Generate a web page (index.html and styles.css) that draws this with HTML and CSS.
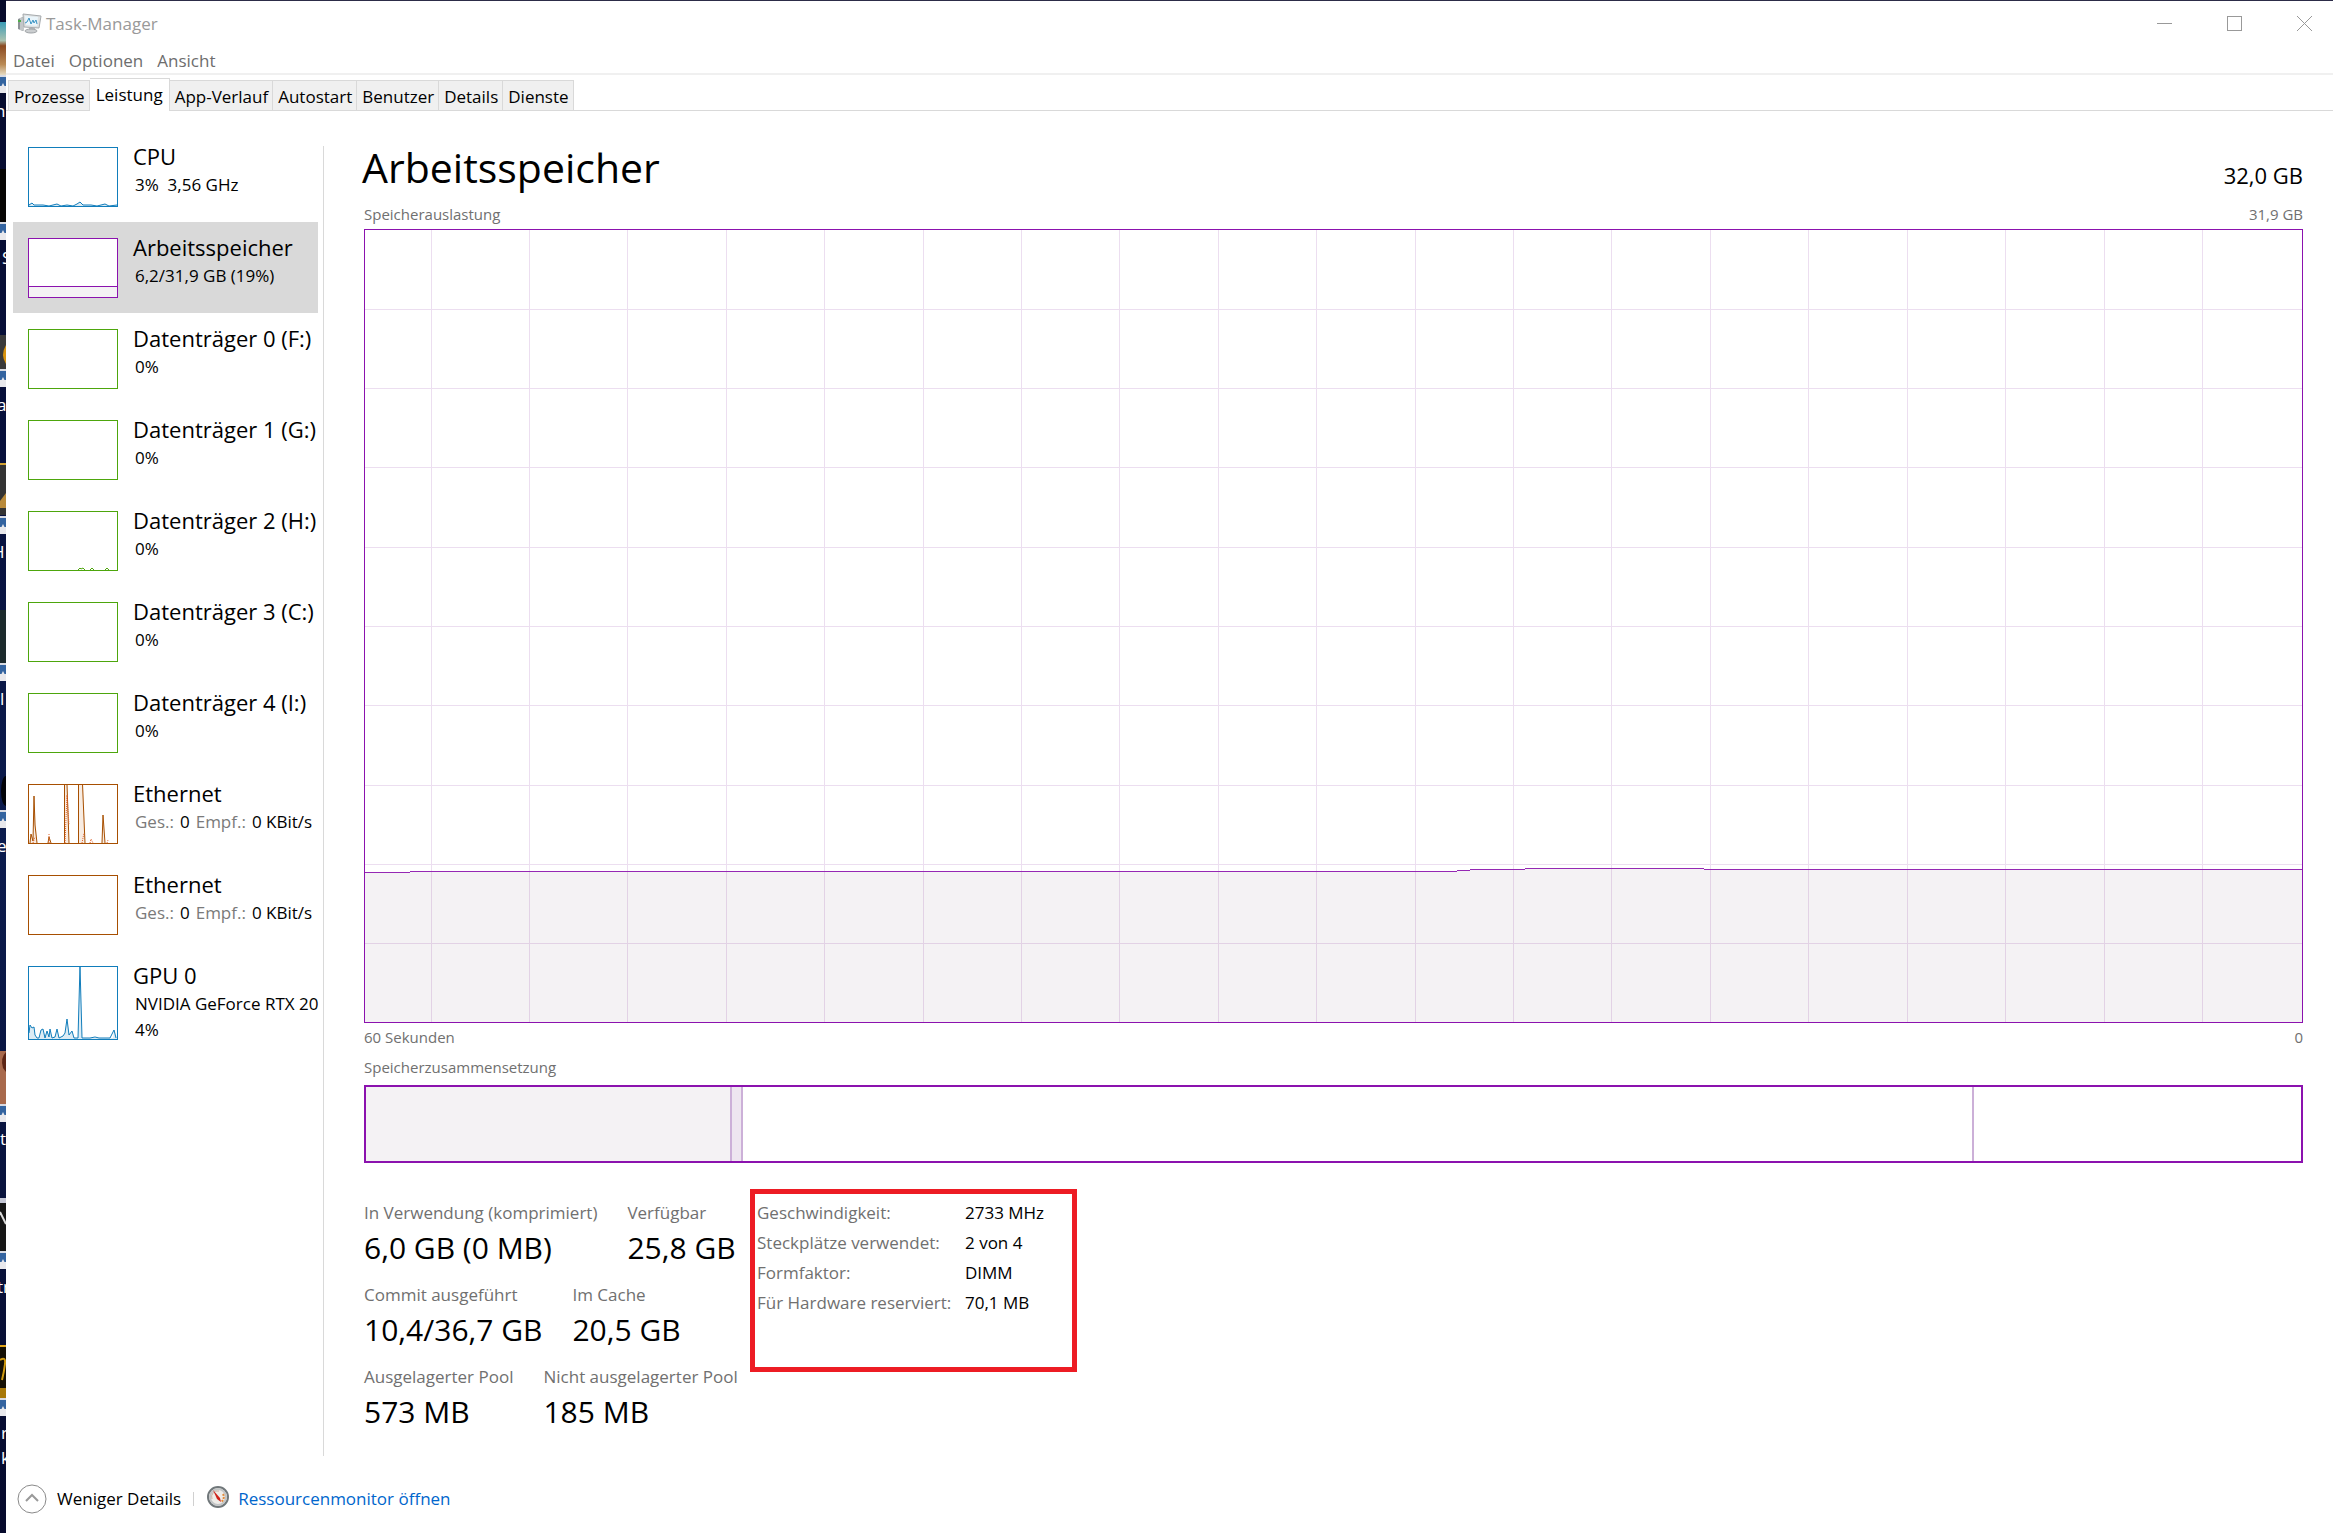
FILE: index.html
```html
<!DOCTYPE html>
<html lang="de">
<head>
    <meta charset="utf-8">
    <title>Task-Manager</title>
    <link rel="stylesheet" href="styles.css">
</head>
<body>
    <div class="screen">
    <!-- strip of the desktop behind the window -->
    <svg class="desktop" width="6" height="1533" viewBox="0 0 6 1533" aria-hidden="true">
        <defs>
            <linearGradient id="sky" x1="0" y1="0" x2="0" y2="1">
                <stop offset="0" stop-color="#070b2b"/>
                <stop offset=".3" stop-color="#07103c"/>
                <stop offset=".55" stop-color="#0c1c4e"/>
                <stop offset="1" stop-color="#060a2c"/>
            </linearGradient>
            <linearGradient id="beach" x1="0" y1="0" x2="0" y2="1">
                <stop offset="0" stop-color="#3a9bb5"/>
                <stop offset=".35" stop-color="#a9c2b0"/>
                <stop offset=".45" stop-color="#8a4a22"/>
                <stop offset=".8" stop-color="#b98a55"/>
                <stop offset="1" stop-color="#e6dcc4"/>
            </linearGradient>
            <g id="badge">
                <rect width="6" height="16" fill="#e8e8ec"/>
                <rect width="6" height="9" fill="#3464a0"/>
                <path d="M0 12 3 6 6 12Z" fill="#e8e8ec"/>
                <rect y="-2" width="6" height="2" fill="#d8dae2"/>
            </g>
        </defs>
        <rect width="6" height="1533" fill="url(#sky)"/>
        <rect y="22" width="6" height="53" fill="url(#beach)"/>
        <rect y="169" width="6" height="53" fill="#060504"/>
        <rect y="335" width="6" height="34" fill="#3a3a3a"/>
        <path d="M6 345Q0 355 6 364Z" fill="#d8930f"/>
        <rect y="463" width="6" height="52" fill="#333"/>
        <rect y="463" width="6" height="2" fill="#d0a030"/>
        <path d="M6 493 0 501V508H6Z" fill="#b98a3a"/>
        <rect y="610" width="6" height="53" fill="#1c2a2c"/>
        <ellipse cx="6" cy="791" rx="5" ry="15" fill="#020308"/>
        <rect y="1051" width="6" height="53" fill="#a8694c"/>
        <path d="M6 1052Q0 1058 3 1068L6 1072Z" fill="#5c2414"/>
        <rect y="1198" width="6" height="53" fill="#161616"/>
        <rect y="1198" width="6" height="5" fill="#c4c6d4"/>
        <path d="M0 1212 6 1224" stroke="#ddd" stroke-width="2"/>
        <rect y="1345" width="6" height="53" fill="#151005"/>
        <rect y="1345" width="6" height="2" fill="#e0a418"/>
        <path d="M0 1360Q6 1356 5 1364T2 1380M0 1392H6" stroke="#d09a10" stroke-width="2" fill="none"/>
        <rect y="1388" width="6" height="10" fill="#a87808"/>
        <use href="#badge" y="77"/>
        <use href="#badge" y="224"/>
        <use href="#badge" y="371"/>
        <use href="#badge" y="518"/>
        <use href="#badge" y="665"/>
        <use href="#badge" y="812"/>
        <use href="#badge" y="1106"/>
        <use href="#badge" y="1253"/>
        <use href="#badge" y="1400"/>
        <g class="desktop-label">
            <text x="-5" y="117">n</text>
            <text x="2" y="264">S</text>
            <text x="-3" y="411">a</text>
            <text x="-8" y="558">H</text>
            <text x="0" y="705">l</text>
            <text x="-3" y="852">e</text>
            <text x="0" y="1145">t</text>
            <text x="-3" y="1293">tr</text>
            <text x="1" y="1439">r</text>
            <text x="1" y="1464">k</text>
        </g>
    </svg>

    <div class="window">
        <header class="titlebar">
            <svg class="app-icon" width="24" height="22" viewBox="0 0 24 22" aria-hidden="true">
                <path d="M0 6 5 4V18L0 16Z" fill="#8d9296"/>
                <path d="M2 5 6 4V18L2 17Z" fill="#c3c7c9"/>
                <path d="M0 8H3" stroke="#4fae4a" stroke-width="2"/>
                <path d="M5 1 23 3 21 15 6 14Z" fill="#dfe2e3" stroke="#a6aaad"/>
                <path d="M7 3 20 4 19 13 8 12Z" fill="#eaf5fb"/>
                <path d="M7 10 9 9 11 5 13 11 15 7 16 10 18 7 19 11" fill="none" stroke="#3a94c4"/>
                <path d="M11 15H17V18H11Z" fill="#b5b8ba"/>
                <ellipse cx="13" cy="18" rx="6" ry="2" fill="#cbced0" stroke="#a0a4a7"/>
            </svg>
            <span class="window-title">Task-Manager</span>
            <div class="window-buttons">
                <button aria-label="Minimieren"><svg width="15" height="15" viewBox="0 0 15 15"><path d="M0 7.5H15"/></svg></button>
                <button aria-label="Maximieren"><svg width="15" height="15" viewBox="0 0 15 15"><path d="M.5 .5H14.500V14.500H.5Z"/></svg></button>
                <button aria-label="Schließen"><svg width="15" height="15" viewBox="0 0 15 15"><path class="smooth" d="M0 0 15 15M15 0 0 15"/></svg></button>
            </div>
        </header>

        <nav class="menu">
            <button>Datei</button>
            <button>Optionen</button>
            <button>Ansicht</button>
        </nav>

        <div class="tabs" role="tablist">
            <button role="tab">Prozesse</button>
            <button role="tab" class="active" aria-selected="true">Leistung</button>
            <button role="tab">App-Verlauf</button>
            <button role="tab">Autostart</button>
            <button role="tab">Benutzer</button>
            <button role="tab">Details</button>
            <button role="tab">Dienste</button>
        </div>

        <div class="content">
            <aside class="sidebar">
                <button class="item">
                    <svg class="thumb cpu" viewBox="0 0 88 58">
                        <path class="fill" d="M0 58V56L3 55 5 57 14 57 20 58 28 56 32 58 38 57 44 58 48 56 51 54 54 57 62 57 68 58 76 56 80 58 88 57V58Z"/>
                        <path class="line" d="M0 57 3 55 5 57 14 57 20 58 28 56 32 58 38 57 44 58 48 56 51 54 54 57 62 57 68 58 76 56 80 58 88 57"/>
                    </svg>
                    <span class="item-text"><span class="item-title">CPU</span><span class="item-sub">3%&nbsp; 3,56 GHz</span></span>
                </button>
                <button class="item selected">
                    <svg class="thumb memory" viewBox="0 0 88 58">
                        <path class="fill" d="M0 47H88V58H0Z"/>
                        <path class="line crisp" d="M0 47.500H88"/>
                    </svg>
                    <span class="item-text"><span class="item-title">Arbeitsspeicher</span><span class="item-sub">6,2/31,9 GB (19%)</span></span>
                </button>
                <button class="item">
                    <svg class="thumb disk" viewBox="0 0 88 58"></svg>
                    <span class="item-text"><span class="item-title">Datenträger 0 (F:)</span><span class="item-sub">0%</span></span>
                </button>
                <button class="item">
                    <svg class="thumb disk" viewBox="0 0 88 58"></svg>
                    <span class="item-text"><span class="item-title">Datenträger 1 (G:)</span><span class="item-sub">0%</span></span>
                </button>
                <button class="item">
                    <svg class="thumb disk" viewBox="0 0 88 58">
                        <path class="line" d="M49 58 51 56 52 57 54 56 56 58M61 58 63 56 65 58M76 58 78 56 80 58"/>
                    </svg>
                    <span class="item-text"><span class="item-title">Datenträger 2 (H:)</span><span class="item-sub">0%</span></span>
                </button>
                <button class="item">
                    <svg class="thumb disk" viewBox="0 0 88 58"></svg>
                    <span class="item-text"><span class="item-title">Datenträger 3 (C:)</span><span class="item-sub">0%</span></span>
                </button>
                <button class="item">
                    <svg class="thumb disk" viewBox="0 0 88 58"></svg>
                    <span class="item-text"><span class="item-title">Datenträger 4 (I:)</span><span class="item-sub">0%</span></span>
                </button>
                <button class="item">
                    <svg class="thumb net" viewBox="0 0 88 58">
                        <path class="fill" d="M1 58 2 49 4 56 5 11 8 58ZM19 58 20 51 22 58ZM35 58V-1H38L40 58ZM49 58V-1H54L56 58ZM73 58 74 30 76 58Z"/>
                        <path class="line" d="M1 58 2 49 4 56 5 11 6 40 8 58M19 58 20 52 22 58M35.500 58V-1M38 -1 40 58M49.500 58V-1M53.500 -1 56 58M73 58 74 30 76 58"/>
                        <path class="line dots" d="M4 58 6 52M20 58V49M36 58 38 10 40 40M53 58 55 48M61 58 62 54 64 58M78 58 79 55"/>
                    </svg>
                    <span class="item-text"><span class="item-title">Ethernet</span><span class="item-sub rates"><i>Ges.:</i><b>0</b><i>Empf.:</i><b>0 KBit/s</b></span></span>
                </button>
                <button class="item">
                    <svg class="thumb net" viewBox="0 0 88 58"></svg>
                    <span class="item-text"><span class="item-title">Ethernet</span><span class="item-sub rates"><i>Ges.:</i><b>0</b><i>Empf.:</i><b>0 KBit/s</b></span></span>
                </button>
                <button class="item">
                    <svg class="thumb gpu" viewBox="0 0 88 72">
                        <path class="fill" d="M0 66 1 58 3 61 5 60 6 68 8 71 11 71 12 63 14 62 16 71 18 64 20 70 21 62 23 71 26 70 28 62 30 71 34 69 36 66 38 52 40 68 43 64 45 71H49L51 -1 53 71H84L85 63 88 71V72H0Z"/>
                        <path class="line" d="M0 66 1 58 3 61 5 60 6 68 8 71 10 71 12 63 14 62 16 71 18 64 20 70 21 62 23 71 26 70 28 62 30 71 34 69 36 66 38 52 40 68 43 64 45 71 49 71 51 -1 53 71 61 71 66 70 70 71 81 71 85 63 87 71"/>
                    </svg>
                    <span class="item-text"><span class="item-title">GPU 0</span><span class="item-sub">NVIDIA GeForce RTX 20</span><span class="item-sub last">4%</span></span>
                </button>
            </aside>

            <main class="memory-page">
                <div class="page-head">
                    <h1>Arbeitsspeicher</h1>
                    <span class="capacity">32,0 GB</span>
                </div>
                <div class="caption"><span>Speicherauslastung</span><span>31,9 GB</span></div>
                <div class="chart">
                    <svg viewBox="0 0 1937 793" preserveAspectRatio="none">
                        <path class="grid" d="M66 0V793M164 0V793M262 0V793M361 0V793M459 0V793M558 0V793M656 0V793M754 0V793M853 0V793M951 0V793M1050 0V793M1148 0V793M1246 0V793M1345 0V793M1443 0V793M1542 0V793M1640 0V793M1739 0V793M1837 0V793M0 80H1937M0 159H1937M0 238H1937M0 318H1937M0 397H1937M0 476H1937M0 556H1937M0 635H1937M0 714H1937"/>
                        <path class="area" d="M0 643H40L65 642H1090L1115 640H1155L1185 639H1315L1345 640H1937V793H0Z"/>
                        <path class="curve" d="M0 643H40L65 642H1090L1115 640H1155L1185 639H1315L1345 640H1937"/>
                    </svg>
                </div>
                <div class="caption time"><span>60 Sekunden</span><span>0</span></div>
                <div class="caption"><span>Speicherzusammensetzung</span></div>
                <div class="composition">
                    <div class="used" style="width: 18.9%"></div>
                    <div class="modified" style="width: 0.6%"></div>
                    <div class="standby" style="width: 63.6%"></div>
                </div>

                <div class="stats">
                    <div class="stats-left">
                        <dl class="stat-row">
                            <div><dt>In Verwendung (komprimiert)</dt><dd>6,0 GB (0 MB)</dd></div>
                            <div><dt>Verfügbar</dt><dd>25,8 GB</dd></div>
                        </dl>
                        <dl class="stat-row">
                            <div><dt>Commit ausgeführt</dt><dd>10,4/36,7 GB</dd></div>
                            <div><dt>Im Cache</dt><dd>20,5 GB</dd></div>
                        </dl>
                        <dl class="stat-row">
                            <div><dt>Ausgelagerter Pool</dt><dd>573 MB</dd></div>
                            <div><dt>Nicht ausgelagerter Pool</dt><dd>185 MB</dd></div>
                        </dl>
                    </div>
                    <dl class="hardware">
                        <dt>Geschwindigkeit:</dt><dd>2733 MHz</dd>
                        <dt>Steckplätze verwendet:</dt><dd>2 von 4</dd>
                        <dt>Formfaktor:</dt><dd>DIMM</dd>
                        <dt>Für Hardware reserviert:</dt><dd>70,1 MB</dd>
                    </dl>
                </div>
            </main>
        </div>

        <footer class="footer">
            <button class="less">
                <svg width="30" height="30" viewBox="0 0 30 30" aria-hidden="true">
                    <circle cx="15" cy="15" r="14" fill="none" stroke="#8a8a8a"/>
                    <path d="M9 17 15 11 21 17" fill="none" stroke="#999" stroke-width="2"/>
                </svg>
                Weniger Details
            </button>
            <span class="separator"></span>
            <svg class="gauge" width="24" height="28" viewBox="0 0 24 28" aria-hidden="true">
                <circle cx="12" cy="12" r="10" fill="#efece8" stroke="#70777a" stroke-width="2"/>
                <circle cx="12" cy="12" r="8" fill="none" stroke="#c2c5c6" stroke-width="2"/>
                <path d="M6 14A6 6 0 0 1 13 6" fill="none" stroke="#c9b0a4"/>
                <path d="M17 9A6 6 0 0 1 15 17" fill="none" stroke="#e28b3c" stroke-width="2" stroke-dasharray="2 1"/>
                <path d="M7 5 14 13 15 17 11 14Z" fill="#cf2018"/>
            </svg>
            <a href="#">Ressourcenmonitor öffnen</a>
        </footer>
    </div>
    </div>
</body>
</html>
```
FILE: styles.css
```css
/* General styles */
* {
  box-sizing: border-box;
}

body {
  margin: 0;
  font-family: "Open Sans", "Noto Sans", sans-serif;
  font-size: 17px;
  line-height: 26px;
  color: #000;
  background-color: #070b2b;
}

button {
  font: inherit;
  color: inherit;
  background: none;
  border: none;
  padding: 0;
  text-align: left;
  cursor: pointer;
}

dl, dd, h1 {
  margin: 0;
}

.screen {
  display: flex;
  min-height: 100vh;
  overflow: hidden;
}

.desktop {
  flex: none;
}

.desktop-label {
  fill: #fff;
  font-size: 17px;
}

.window {
  flex: 1;
  min-width: 0;
  display: flex;
  flex-direction: column;
  background-color: #fff;
  border-top: 1px solid #2c2c48;
}

/* Title bar */
.titlebar {
  display: flex;
  align-items: center;
  height: 45px;
  padding-left: 12px;
  color: #999;
}

.window-title {
  flex: 1;
  margin-left: 4px;
}

.window-buttons {
  display: flex;
  align-self: stretch;
  margin-right: -6px;
}

.window-buttons button {
  width: 70px;
  display: flex;
  justify-content: center;
  align-items: center;
}

.window-buttons path {
  fill: none;
  stroke: #999;
  shape-rendering: crispEdges;
}

.window-buttons .smooth {
  shape-rendering: auto;
}

/* Menu and tabs */
.menu {
  display: flex;
  gap: 14px;
  height: 29px;
  padding: 1px 0 0 7px;
  color: #6d6d6d;
  border-bottom: 2px solid #f0f0f0;
}

.menu button {
  line-height: 28px;
}

.tabs {
  display: flex;
  align-items: flex-end;
  height: 36px;
  padding-left: 2px;
  border-bottom: 1px solid #d9d9d9;
}

.tabs button {
  height: 30px;
  padding: 0 4px 0 5px;
  background-color: #f0f0f0;
  border: 1px solid #d9d9d9;
  border-bottom: none;
  border-left-width: 0;
  line-height: 32px;
}

.tabs button:first-child {
  border-left-width: 1px;
}

.tabs .active {
  height: 33px;
  margin-bottom: -1px;
  padding: 0 6px;
  background-color: #fff;
}

.content {
  flex: 1;
  display: flex;
}

/* Sidebar */
.sidebar {
  flex: none;
  width: 318px;
  margin-top: 35px;
  border-right: 1px solid #d9d9d9;
  padding-left: 7px;
}

.item {
  display: flex;
  gap: 15px;
  width: 305px;
  height: 91px;
  padding: 16px 0 0 15px;
  white-space: nowrap;
}

.item:first-child {
  height: 76px;
  padding-top: 1px;
}

.item.selected {
  background-color: #d9d9d9;
}

.item:last-child {
  width: 310px;
  height: 110px;
}

.item-text {
  display: flex;
  flex-direction: column;
}

.item-title {
  font-size: 22px;
  line-height: 18px;
}

.item-sub {
  padding: 7px 0 0 2px;
  line-height: 26px;
}

.item-sub.last {
  padding-top: 0;
}

.rates i {
  margin-right: 6px;
  font-style: normal;
  color: #7a7a7a;
}

.rates b {
  margin-right: 6px;
  font-weight: 400;
}

.thumb {
  flex: none;
  width: 90px;
  height: 60px;
  background-color: #fff;
  border: 1px solid;
}

.thumb .line {
  fill: none;
  stroke: currentColor;
}

.thumb .crisp {
  shape-rendering: crispEdges;
}

.cpu, .gpu {
  color: #117dbb;
}

.cpu .fill, .gpu .fill {
  fill: #dcebf4;
}

.memory {
  color: #8b12ae;
}

.memory .fill {
  fill: #f4f2f4;
}

.disk {
  color: #4da60c;
}

.net {
  color: #a74f01;
}

.net .fill {
  fill: #f8ece2;
}

.net .dots {
  stroke: #e0622c;
  stroke-dasharray: 1 1;
}

.gpu {
  height: 74px;
}

/* Memory page */
.memory-page {
  flex: 1;
  min-width: 0;
  display: flex;
  flex-direction: column;
  padding: 29px 30px 10px 40px;
}

.page-head {
  display: flex;
  justify-content: space-between;
  align-items: flex-start;
  height: 63px;
}

h1 {
  margin-left: -2px;
  font-size: 41px;
  font-weight: 400;
  line-height: 54px;
}

.capacity {
  font-size: 22px;
  line-height: 70px;
}

.caption {
  display: flex;
  justify-content: space-between;
  margin-bottom: 4px;
  font-size: 15px;
  line-height: 22px;
  color: #707070;
}

.chart {
  flex: 1;
  min-height: 300px;
  position: relative;
  border: 1px solid #8b12ae;
}

.chart svg {
  position: absolute;
  width: 100%;
  height: 100%;
}

.chart path {
  fill: none;
  vector-effect: non-scaling-stroke;
  shape-rendering: crispEdges;
}

.chart .grid {
  stroke: #ecdef0;
}

.chart .area {
  fill: rgba(60, 40, 70, 0.06);
}

.chart .curve {
  stroke: #9528b4;
}

.caption.time {
  margin: 3px 0 8px;
}

.composition {
  display: flex;
  height: 78px;
  margin-top: 3px;
  border: 2px solid #8b12ae;
}

.composition div {
  border-right: 2px solid #ccb0d8;
}

.composition .used {
  background-color: #f4f2f4;
}

.composition .modified {
  background-color: #eee6f0;
}

/* Numbers below the graph */
.stats {
  display: flex;
  align-items: flex-start;
  margin-top: 26px;
}

.stats-left {
  width: 386px;
  padding-top: 11px;
}

.stat-row {
  display: flex;
  gap: 30px;
  height: 82px;
  white-space: nowrap;
}

.stats dt {
  color: #707070;
}

.stat-row dd {
  font-size: 30px;
  line-height: 44px;
}

.hardware {
  display: grid;
  grid-template-columns: 208px auto;
  grid-auto-rows: 30px;
  width: 327px;
  height: 183px;
  padding: 6px 0 0 2px;
  border: 5px solid #ed1c24;
  white-space: nowrap;
}

/* Footer */
.footer {
  display: flex;
  align-items: center;
  height: 77px;
  padding: 8px 0 0 11px;
}

.less {
  display: flex;
  align-items: center;
  gap: 10px;
}

.separator {
  width: 1px;
  height: 14px;
  margin: 0 12px;
  background-color: #d0d0d0;
}

.footer a {
  margin-left: 8px;
  color: #0066cc;
  text-decoration: none;
}
```
